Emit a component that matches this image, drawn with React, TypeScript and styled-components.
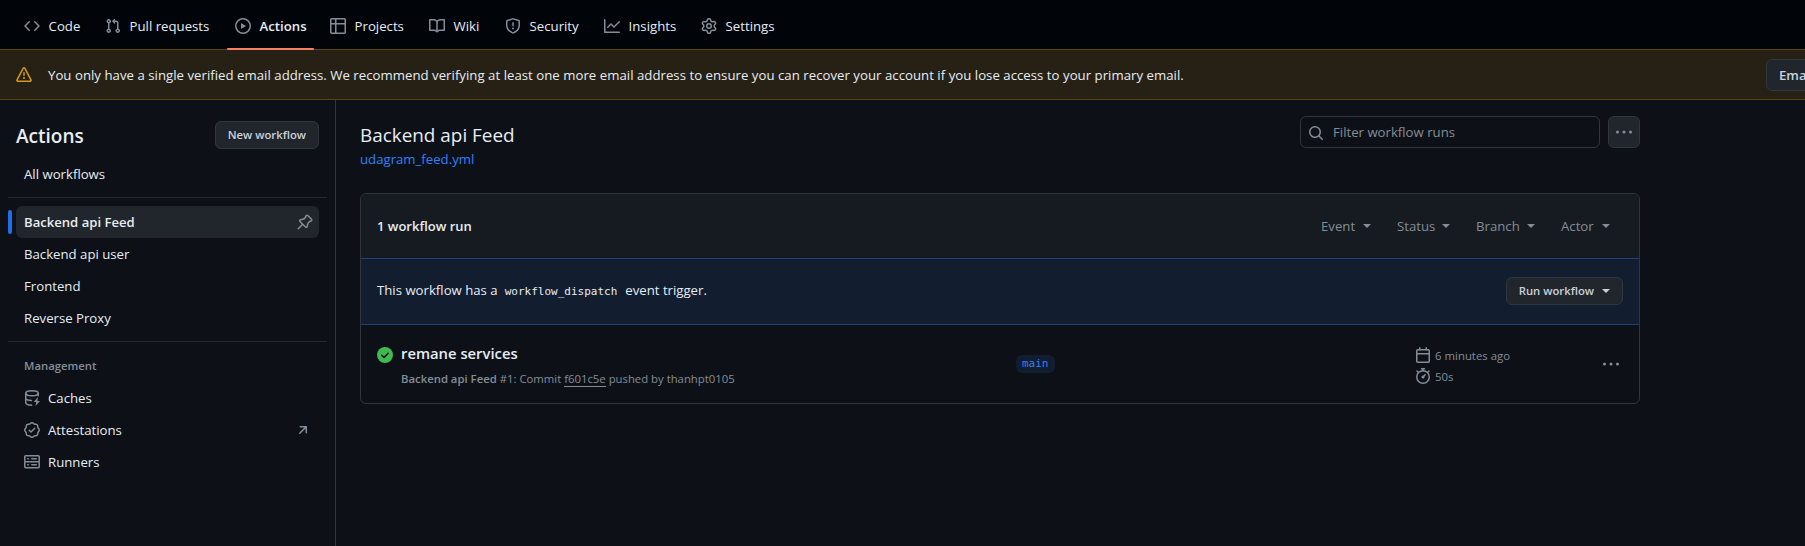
import React from 'react';
import styled, { createGlobalStyle, css } from 'styled-components';

const GlobalStyle = createGlobalStyle`
  *, *::before, *::after { box-sizing: border-box; }
  html, body { margin: 0; background: #0d1117; overflow: hidden; }
  body {
    font-family: 'Open Sans', 'Noto Sans', sans-serif;
    font-size: 13.2px;
    line-height: 21px;
    color: #e6edf3;
  }
  button, input { font-family: inherit; }
  a { color: inherit; text-decoration: none; }
  h1, h2, h3, p, ul { margin: 0; padding: 0; font-weight: inherit; }
`;

const paths = {
  code: 'm11.28 3.22 4.25 4.25a.75.75 0 0 1 0 1.06l-4.25 4.25a.749.749 0 0 1-1.275-.326.749.749 0 0 1 .215-.734L13.94 8l-3.72-3.72a.749.749 0 0 1 .326-1.275.749.749 0 0 1 .734.215Zm-6.56 0a.751.751 0 0 1 1.042.018.751.751 0 0 1 .018 1.042L2.06 8l3.72 3.72a.749.749 0 0 1-.326 1.275.749.749 0 0 1-.734-.215L.47 8.53a.75.75 0 0 1 0-1.06Z',
  pull: 'M1.5 3.25a2.25 2.25 0 1 1 3 2.122v5.256a2.251 2.251 0 1 1-1.5 0V5.372A2.25 2.25 0 0 1 1.5 3.25Zm5.677-.177L9.573.677A.25.25 0 0 1 10 .854V2.5h1A2.5 2.5 0 0 1 13.5 5v5.628a2.251 2.251 0 1 1-1.5 0V5a1 1 0 0 0-1-1h-1v1.646a.25.25 0 0 1-.427.177L7.177 3.427a.25.25 0 0 1 0-.354ZM3.75 2.5a.75.75 0 1 0 0 1.5.75.75 0 0 0 0-1.5Zm0 9.5a.75.75 0 1 0 0 1.5.75.75 0 0 0 0-1.5Zm8.25.75a.75.75 0 1 0 1.5 0 .75.75 0 0 0-1.5 0Z',
  play: 'M8 0a8 8 0 1 1 0 16A8 8 0 0 1 8 0ZM1.5 8a6.5 6.5 0 1 0 13 0 6.5 6.5 0 0 0-13 0Zm4.879-2.773 4.264 2.559a.25.25 0 0 1 0 .428l-4.264 2.559A.25.25 0 0 1 6 10.559V5.442a.25.25 0 0 1 .379-.215Z',
  table: 'M0 1.75C0 .784.784 0 1.75 0h12.5C15.216 0 16 .784 16 1.75v12.5A1.75 1.75 0 0 1 14.25 16H1.75A1.75 1.75 0 0 1 0 14.25ZM6.5 6.5v8h7.75a.25.25 0 0 0 .25-.25V6.5Zm8-1.5V1.75a.25.25 0 0 0-.25-.25H6.5V5Zm-13 1.5v7.75c0 .138.112.25.25.25H5v-8ZM5 5V1.5H1.75a.25.25 0 0 0-.25.25V5Z',
  book: 'M0 1.75A.75.75 0 0 1 .75 1h4.253c1.227 0 2.317.59 3 1.501A3.743 3.743 0 0 1 11.006 1h4.245a.75.75 0 0 1 .75.75v10.5a.75.75 0 0 1-.75.75h-4.507a2.25 2.25 0 0 0-1.591.659l-.622.621a.75.75 0 0 1-1.06 0l-.622-.621A2.25 2.25 0 0 0 5.258 13H.75a.75.75 0 0 1-.75-.75Zm7.251 10.324.004-5.073-.002-2.253A2.25 2.25 0 0 0 5.003 2.5H1.5v9h3.757a3.75 3.75 0 0 1 1.994.574ZM8.755 4.75l-.004 7.322a3.752 3.752 0 0 1 1.992-.572H14.5v-9h-3.495a2.25 2.25 0 0 0-2.25 2.25Z',
  shield: 'M7.467.133a1.748 1.748 0 0 1 1.066 0l5.25 1.68A1.75 1.75 0 0 1 15 3.48V7c0 1.566-.32 3.182-1.303 4.682-.983 1.498-2.585 2.813-5.032 3.855a1.697 1.697 0 0 1-1.33 0c-2.447-1.042-4.049-2.357-5.032-3.855C1.32 10.182 1 8.566 1 7V3.48a1.75 1.75 0 0 1 1.217-1.667Zm.61 1.429a.25.25 0 0 0-.153 0l-5.25 1.68a.25.25 0 0 0-.174.238V7c0 1.358.275 2.666 1.057 3.86.784 1.194 2.121 2.34 4.366 3.297a.196.196 0 0 0 .154 0c2.245-.956 3.582-2.104 4.366-3.298C13.225 9.666 13.5 8.36 13.5 7V3.48a.251.251 0 0 0-.174-.237l-5.25-1.68ZM8.75 4.75v3a.75.75 0 0 1-1.5 0v-3a.75.75 0 0 1 1.5 0ZM9 10.5a1 1 0 1 1-2 0 1 1 0 0 1 2 0Z',
  graph: 'M1.5 1.75V13.5h13.75a.75.75 0 0 1 0 1.5H.75a.75.75 0 0 1-.75-.75V1.75a.75.75 0 0 1 1.5 0Zm14.28 2.53-5.25 5.25a.75.75 0 0 1-1.06 0L7 7.06 4.28 9.78a.751.751 0 0 1-1.042-.018.751.751 0 0 1-.018-1.042l3.25-3.25a.75.75 0 0 1 1.06 0L10 7.94l4.72-4.72a.751.751 0 0 1 1.042.018.751.751 0 0 1 .018 1.042Z',
  gear: 'M8 0a8.2 8.2 0 0 1 .701.031C9.444.095 9.99.645 10.16 1.29l.288 1.107c.018.066.079.158.212.224.231.114.454.243.668.386.123.082.233.09.299.071l1.103-.303c.644-.176 1.392.021 1.82.63.27.385.506.792.704 1.218.315.675.111 1.422-.364 1.891l-.814.806c-.049.048-.098.147-.088.294.016.257.016.515 0 .772-.01.147.038.246.088.294l.814.806c.475.469.679 1.216.364 1.891a7.977 7.977 0 0 1-.704 1.217c-.428.61-1.176.807-1.82.63l-1.102-.302c-.067-.019-.177-.011-.3.071a5.909 5.909 0 0 1-.668.386c-.133.066-.194.158-.211.224l-.29 1.106c-.168.646-.715 1.196-1.458 1.26a8.006 8.006 0 0 1-1.402 0c-.743-.064-1.289-.614-1.458-1.26l-.289-1.106c-.018-.066-.079-.158-.212-.224a5.738 5.738 0 0 1-.668-.386c-.123-.082-.233-.09-.299-.071l-1.103.303c-.644.176-1.392-.021-1.82-.63a8.12 8.12 0 0 1-.704-1.218c-.315-.675-.111-1.422.363-1.891l.815-.806c.05-.048.098-.147.088-.294a6.214 6.214 0 0 1 0-.772c.01-.147-.038-.246-.088-.294l-.815-.806C.635 6.045.431 5.298.746 4.623a7.92 7.92 0 0 1 .704-1.217c.428-.61 1.176-.807 1.82-.63l1.102.302c.067.019.177.011.3-.071.214-.143.437-.272.668-.386.133-.066.194-.158.211-.224l.29-1.106C6.009.645 6.556.095 7.299.03 7.53.01 7.764 0 8 0Zm-.571 1.525c-.036.003-.108.036-.137.146l-.289 1.105c-.147.561-.549.967-.998 1.189-.173.086-.34.183-.5.29-.417.278-.97.423-1.529.27l-1.103-.303c-.109-.03-.175.016-.195.045-.22.312-.412.644-.573.99-.014.031-.021.11.059.19l.815.806c.411.406.562.957.53 1.456a4.709 4.709 0 0 0 0 .582c.032.499-.119 1.05-.53 1.456l-.815.806c-.081.08-.073.159-.059.19.162.346.353.677.573.989.02.03.085.076.195.046l1.102-.303c.56-.153 1.113-.008 1.53.27.161.107.328.204.501.29.447.222.85.629.997 1.189l.289 1.105c.029.109.101.143.137.146a6.6 6.6 0 0 0 1.142 0c.036-.003.108-.036.137-.146l.289-1.105c.147-.561.549-.967.998-1.189.173-.086.34-.183.5-.29.417-.278.97-.423 1.529-.27l1.103.303c.109.029.175-.016.195-.045.22-.313.411-.644.573-.99.014-.031.021-.11-.059-.19l-.815-.806c-.411-.406-.562-.957-.53-1.456a4.709 4.709 0 0 0 0-.582c-.032-.499.119-1.05.53-1.456l.815-.806c.081-.08.073-.159.059-.19a6.464 6.464 0 0 0-.573-.989c-.02-.03-.085-.076-.195-.046l-1.102.303c-.56.153-1.113.008-1.53-.27a4.44 4.44 0 0 0-.501-.29c-.447-.222-.85-.629-.997-1.189l-.289-1.105c-.029-.11-.101-.143-.137-.146a6.6 6.6 0 0 0-1.142 0ZM11 8a3 3 0 1 1-6 0 3 3 0 0 1 6 0ZM9.5 8a1.5 1.5 0 1 0-3.001.001A1.5 1.5 0 0 0 9.5 8Z',
  alert: 'M6.457 1.047c.659-1.234 2.427-1.234 3.086 0l6.082 11.378A1.75 1.75 0 0 1 14.082 15H1.918a1.75 1.75 0 0 1-1.543-2.575Zm1.763.707a.25.25 0 0 0-.44 0L1.698 13.132a.25.25 0 0 0 .22.368h12.164a.25.25 0 0 0 .22-.368Zm.53 3.996v2.5a.75.75 0 0 1-1.5 0v-2.5a.75.75 0 0 1 1.5 0ZM9 11a1 1 0 1 1-2 0 1 1 0 0 1 2 0Z',
  pin: 'm11.294.984 3.722 3.722a1.75 1.75 0 0 1-.504 2.826l-1.327.613a3.089 3.089 0 0 0-1.707 2.084l-.584 2.454c-.317 1.332-1.972 1.8-2.94.832L5.75 11.311 1.78 15.28a.749.749 0 1 1-1.06-1.06l3.969-3.97-2.204-2.204c-.968-.968-.5-2.623.832-2.94l2.454-.584a3.08 3.08 0 0 0 2.084-1.707l.613-1.327a1.75 1.75 0 0 1 2.826-.504ZM6.283 9.723l2.732 2.731a.25.25 0 0 0 .42-.119l.584-2.454a4.586 4.586 0 0 1 2.537-3.098l1.328-.613a.25.25 0 0 0 .072-.404l-3.722-3.722a.25.25 0 0 0-.404.072l-.613 1.328a4.584 4.584 0 0 1-3.098 2.537l-2.454.584a.25.25 0 0 0-.119.42l2.731 2.732Z',
  verified: 'm9.585.52.929.68c.153.112.331.186.518.215l1.138.175a2.678 2.678 0 0 1 2.24 2.24l.174 1.139c.029.187.103.365.215.518l.68.928a2.677 2.677 0 0 1 0 3.17l-.68.928a1.174 1.174 0 0 0-.215.518l-.175 1.138a2.678 2.678 0 0 1-2.241 2.241l-1.138.175a1.17 1.17 0 0 0-.518.215l-.928.68a2.677 2.677 0 0 1-3.17 0l-.928-.68a1.174 1.174 0 0 0-.518-.215L3.83 14.41a2.678 2.678 0 0 1-2.24-2.24l-.175-1.138a1.17 1.17 0 0 0-.215-.518l-.68-.928a2.677 2.677 0 0 1 0-3.17l.68-.928c.112-.153.186-.331.215-.518l.175-1.14a2.678 2.678 0 0 1 2.24-2.24l1.139-.175c.187-.029.365-.103.518-.215l.928-.68a2.677 2.677 0 0 1 3.17 0ZM7.303 1.728l-.927.68a2.67 2.67 0 0 1-1.18.489l-1.137.174a1.179 1.179 0 0 0-.987.987l-.174 1.136a2.677 2.677 0 0 1-.489 1.18l-.68.928a1.18 1.18 0 0 0 0 1.394l.68.927c.256.348.424.753.489 1.18l.174 1.137c.078.509.478.909.987.987l1.136.174a2.67 2.67 0 0 1 1.18.489l.928.68c.414.305.979.305 1.394 0l.927-.68a2.67 2.67 0 0 1 1.18-.489l1.137-.174a1.18 1.18 0 0 0 .987-.987l.174-1.136a2.67 2.67 0 0 1 .489-1.18l.68-.928a1.176 1.176 0 0 0 0-1.394l-.68-.927a2.686 2.686 0 0 1-.489-1.18l-.174-1.137a1.179 1.179 0 0 0-.987-.987l-1.136-.174a2.677 2.677 0 0 1-1.18-.489l-.928-.68a1.176 1.176 0 0 0-1.394 0ZM11.28 6.78l-3.75 3.75a.75.75 0 0 1-1.06 0L4.72 8.78a.751.751 0 0 1 .018-1.042.751.751 0 0 1 1.042-.018L7 8.94l3.22-3.22a.751.751 0 0 1 1.042.018.751.751 0 0 1 .018 1.042Z',
  server: 'M1.75 1h12.5c.966 0 1.75.784 1.75 1.75v4c0 .372-.116.717-.314 1 .198.283.314.628.314 1v4a1.75 1.75 0 0 1-1.75 1.75H1.75A1.75 1.75 0 0 1 0 12.75v-4c0-.358.109-.707.314-1a1.739 1.739 0 0 1-.314-1v-4C0 1.784.784 1 1.75 1ZM1.5 2.75v4c0 .138.112.25.25.25h12.5a.25.25 0 0 0 .25-.25v-4a.25.25 0 0 0-.25-.25H1.75a.25.25 0 0 0-.25.25Zm.25 5.75a.25.25 0 0 0-.25.25v4c0 .138.112.25.25.25h12.5a.25.25 0 0 0 .25-.25v-4a.25.25 0 0 0-.25-.25ZM7 4.75A.75.75 0 0 1 7.75 4h4.5a.75.75 0 0 1 0 1.5h-4.5A.75.75 0 0 1 7 4.75ZM7.75 10h4.5a.75.75 0 0 1 0 1.5h-4.5a.75.75 0 0 1 0-1.5ZM3 4.75A.75.75 0 0 1 3.75 4h.5a.75.75 0 0 1 0 1.5h-.5A.75.75 0 0 1 3 4.75ZM3.75 10h.5a.75.75 0 0 1 0 1.5h-.5a.75.75 0 0 1 0-1.5Z',
  search: 'M10.68 11.74a6 6 0 0 1-7.922-8.982 6 6 0 0 1 8.982 7.922l3.04 3.04a.749.749 0 0 1-.326 1.275.749.749 0 0 1-.734-.215ZM11.5 7a4.499 4.499 0 1 0-8.997 0A4.499 4.499 0 0 0 11.5 7Z',
  kebab: 'M8 9.5a1.5 1.5 0 1 0 0-3 1.5 1.5 0 0 0 0 3ZM1.5 9.5a1.5 1.5 0 1 0 0-3 1.5 1.5 0 0 0 0 3Zm13 0a1.5 1.5 0 1 0 0-3 1.5 1.5 0 0 0 0 3Z',
  arrow: 'M4.53 4.75A.75.75 0 0 1 5.28 4h6.01a.75.75 0 0 1 .75.75v6.01a.75.75 0 0 1-1.5 0v-4.2l-5.26 5.261a.749.749 0 0 1-1.275-.326.749.749 0 0 1 .215-.734L9.48 5.5h-4.2a.75.75 0 0 1-.75-.75Z',
};

type IconName = keyof typeof paths;

const IconSvg = styled.svg<{ $color: string }>`
  flex: none;
  display: block;
  color: ${(p) => p.$color};
`;

const Icon = ({ name, color = '#848d97' }: { name: IconName; color?: string }) => (
  <IconSvg $color={color} width="16" height="16" viewBox="0 0 16 16" fill="currentColor">
    <path d={paths[name]} />
  </IconSvg>
);

const CacheIcon = () => (
  <IconSvg $color="#848d97" width="16" height="16" viewBox="0 0 16 16" fill="none" stroke="currentColor" strokeWidth="1.5" strokeLinecap="round">
    <ellipse cx="8" cy="3.25" rx="6.25" ry="2.5" />
    <path d="M1.75 3.25v9.250c0 1.400 2.400 2.600 6 2.750M14.250 3.250v2.500M1.750 7.900c0 1.300 2 2.300 5.700 2.500" />
    <path d="M13.900 7.100 9.700 12.100h2.500l-.700 3.900L16 10.900h-2.600Z" fill="currentColor" stroke="none" />
  </IconSvg>
);

const CalendarIcon = () => (
  <IconSvg $color="#848d97" width="16" height="16" viewBox="0 0 16 16" fill="none" stroke="currentColor" strokeWidth="1.5">
    <rect x="1.75" y="2.75" width="12.5" height="12.5" rx="1" />
    <path d="M1.75 6.75h12.5" />
    <path d="M4.75.75v2M11.25.75v2" strokeLinecap="round" />
  </IconSvg>
);

const StopwatchIcon = () => (
  <IconSvg $color="#848d97" width="16" height="16" viewBox="0 0 16 16" fill="none" stroke="currentColor" strokeWidth="1.5" strokeLinecap="round">
    <circle cx="8" cy="9" r="6.25" />
    <path d="M6.5.75h3M8 1v1.700M13 4l1-1M3 4 2 3M8.200 8.800l2-2.100" />
    <circle cx="8" cy="9" r=".8" fill="currentColor" />
  </IconSvg>
);

const SuccessIcon = () => (
  <IconSvg $color="#3fb950" width="16" height="16" viewBox="0 0 16 16" fill="none">
    <circle cx="8" cy="8" r="8" fill="currentColor" />
    <path d="m4.800 8.300 2.200 2.200 4.200-4.300" stroke="#0d1117" strokeWidth="1.5" strokeLinecap="round" strokeLinejoin="round" />
  </IconSvg>
);

const Caret = styled.span`
  flex: none;
  border: 4px solid transparent;
  border-top-color: currentColor;
  border-bottom: 0;
`;

const Page = styled.div`
  display: flex;
  flex-direction: column;
  height: 546px;
  overflow: hidden;
`;

const RepoNav = styled.nav`
  display: flex;
  flex: none;
  gap: 8px;
  height: 49px;
  padding: 0 16px;
  background: #010409;
`;

const NavTab = styled.a<{ $w: number; $active?: boolean }>`
  position: relative;
  display: flex;
  align-items: center;
  gap: 8.6px;
  width: ${(p) => p.$w}px;
  height: 52px;
  padding: 0 8px;
  white-space: nowrap;
  ${(p) =>
    p.$active &&
    css`
      font-weight: 600;
      &::after {
        content: '';
        position: absolute;
        left: 0;
        right: 0;
        top: 48px;
        height: 2px;
        border-radius: 6px;
        background: #f78166;
      }
    `}
`;

const Flash = styled.div`
  display: flex;
  flex: none;
  align-items: center;
  height: 51px;
  padding-left: 16px;
  gap: 16px;
  border: solid #5e4510;
  border-width: 1px 0;
  background: #272115;
  white-space: nowrap;
`;

const FlashText = styled.p`
  width: 1702px;
  flex: none;
  padding-top: 2px;
  letter-spacing: 0.028px;
`;

const Button = styled.button<{ $size?: 'small' | 'medium' }>`
  display: inline-flex;
  flex: none;
  align-items: center;
  justify-content: center;
  gap: 8px;
  height: ${(p) => (p.$size === 'medium' ? 32 : 28)}px;
  padding: 0 12px;
  border: 1px solid #30363d;
  border-radius: 6px;
  background: #21262d;
  color: #c9d1d9;
  font-size: ${(p) => (p.$size === 'medium' ? 13.2 : 11.3)}px;
  font-weight: 600;
  line-height: 20px;
  white-space: nowrap;
`;

const IconButton = styled(Button)`
  width: 32px;
  padding: 0;
  color: #848d97;
`;

const Body = styled.div`
  display: flex;
  flex: 1;
  min-height: 0;
`;

const Sidebar = styled.aside`
  flex: none;
  width: 336px;
  padding: 21px 8px 0;
  border-right: 1px solid #30363d;
`;

const SidebarHeader = styled.div`
  display: flex;
  align-items: center;
  justify-content: space-between;
  height: 28px;
  margin-bottom: 9px;
  padding: 0 8px;
`;

const SidebarTitle = styled.h2`
  padding-top: 2px;
  font-size: 19px;
  font-weight: 600;
`;

const Divider = styled.hr`
  height: 1px;
  margin: 7px 0 8px;
  border: 0;
  background: #24292f;
`;

const NavItem = styled.a<{ $active?: boolean }>`
  position: relative;
  display: flex;
  align-items: center;
  gap: 8px;
  height: 32px;
  margin: 0 8px;
  padding: 0 6px 0 8px;
  border-radius: 6px;
  ${(p) =>
    p.$active &&
    css`
      background: #21252c;
      font-weight: 600;
      font-size: 13.1px;
      &::before {
        content: '';
        position: absolute;
        left: -8px;
        top: 4px;
        width: 4px;
        height: 24px;
        border-radius: 6px;
        background: #1f6feb;
      }
    `}
`;

const NavLabel = styled.span`
  flex: 1;
`;

const Trailing = styled.span`
  margin-right: 2px;
`;

const GroupTitle = styled.h3`
  margin: 15px 16px 7px;
  color: #848d97;
  font-size: 11.3px;
  font-weight: 600;
  line-height: 18px;
`;

const Main = styled.main`
  flex: none;
  width: 1280px;
  margin-left: 24px;
  padding-top: 16px;
`;

const MainHeader = styled.div`
  display: flex;
  align-items: flex-start;
  justify-content: space-between;
  height: 77px;
`;

const PageTitle = styled.h1`
  padding-top: 4px;
  font-size: 18.9px;
  line-height: 30px;
`;

const FileLink = styled.a`
  display: block;
  margin-top: -1px;
  color: #2f81f7;
`;

const Tools = styled.div`
  display: flex;
  gap: 8px;
`;

const SearchBox = styled.label`
  display: flex;
  align-items: center;
  gap: 9px;
  width: 300px;
  height: 32px;
  padding: 0 7px;
  border: 1px solid #30363d;
  border-radius: 6px;
  svg { margin-top: 2px; }
`;

const SearchInput = styled.input`
  flex: 1;
  min-width: 0;
  padding: 0;
  border: 0;
  outline: 0;
  background: transparent;
  font-size: 13.2px;
  &::placeholder { color: #848d97; }
`;

const RunsBox = styled.section`
  height: 211px;
  border: 1px solid #30363d;
  border-radius: 6px;
  overflow: hidden;
`;

const RunsHeader = styled.header`
  display: flex;
  align-items: center;
  justify-content: space-between;
  height: 64px;
  padding: 0 29px 0 16px;
  background: #161b22;
`;

const RunsCount = styled.strong`
  padding-top: 1px;
  font-size: 13px;
  font-weight: 600;
`;

const Filters = styled.div`
  display: flex;
  gap: 26px;
  color: #848d97;
`;

const Filter = styled.span<{ $w: number }>`
  display: flex;
  align-items: center;
  justify-content: space-between;
  width: ${(p) => p.$w}px;
`;

const Dispatch = styled.div`
  display: flex;
  align-items: center;
  justify-content: space-between;
  height: 67px;
  padding: 0 16px 2px;
  border: solid #1d4379;
  border-width: 1px 0;
  background: #121d2f;
`;

const Code = styled.code`
  margin: 0 8px 0 7px;
  font-family: 'DejaVu Sans Mono', monospace;
  font-size: 11px;
`;

const RunRow = styled.div`
  display: grid;
  grid-template-columns: 24px 615px 399px 188px 16px;
  height: 78px;
  padding: 0 16px;
`;

const RunIcon = styled.div`
  padding-top: 22px;
`;

const RunTitle = styled.h3`
  padding-top: 16px;
  font-size: 14.8px;
  font-weight: 600;
  line-height: 24px;
`;

const RunMeta = styled.p`
  margin-top: 5px;
  color: #848d97;
  font-size: 11.34px;
  line-height: 18px;
  b { font-weight: 600; }
`;

const Commit = styled.a`
  border-bottom: 1px solid #848d97;
`;

const BranchCell = styled.div`
  display: flex;
  align-items: flex-start;
  padding-top: 30px;
`;

const Branch = styled.span`
  height: 18px;
  padding: 0 6px;
  border-radius: 6px;
  background: #121d2f;
  color: #2f81f7;
  font: 11px/18px 'DejaVu Sans Mono', monospace;
`;

const Times = styled.div`
  display: flex;
  flex-direction: column;
  gap: 5px;
  padding-top: 22px;
  color: #848d97;
  font-size: 11.4px;
`;

const TimeLine = styled.span`
  display: flex;
  align-items: center;
  gap: 4px;
  height: 16px;
`;

const RowMenu = styled.div`
  padding-top: 31px;
`;

const tabs: { icon: IconName; label: string; width: number; active?: boolean }[] = [
  { icon: 'code', label: 'Code', width: 73 },
  { icon: 'pull', label: 'Pull requests', width: 122 },
  { icon: 'play', label: 'Actions', width: 87, active: true },
  { icon: 'table', label: 'Projects', width: 91 },
  { icon: 'book', label: 'Wiki', width: 68 },
  { icon: 'shield', label: 'Security', width: 91 },
  { icon: 'graph', label: 'Insights', width: 89 },
  { icon: 'gear', label: 'Settings', width: 92 },
];

const filters = [
  { label: 'Event', width: 50 },
  { label: 'Status', width: 53 },
  { label: 'Branch', width: 59 },
  { label: 'Actor', width: 49 },
];

export default function App() {
  return (
    <Page>
      <GlobalStyle />
      <RepoNav>
        {tabs.map((t) => (
          <NavTab key={t.label} $w={t.width} $active={t.active}>
            <Icon name={t.icon} />
            {t.label}
          </NavTab>
        ))}
      </RepoNav>
      <Flash>
        <Icon name="alert" color="#d29922" />
        <FlashText>
          You only have a single verified email address. We recommend verifying at least one more email address to
          ensure you can recover your account if you lose access to your primary email.
        </FlashText>
        <Button $size="medium">Email settings</Button>
      </Flash>
      <Body>
        <Sidebar>
          <SidebarHeader>
            <SidebarTitle>Actions</SidebarTitle>
            <Button>New workflow</Button>
          </SidebarHeader>
          <NavItem>All workflows</NavItem>
          <Divider />
          <NavItem $active>
            <NavLabel>Backend api Feed</NavLabel>
            <Icon name="pin" />
          </NavItem>
          <NavItem>Backend api user</NavItem>
          <NavItem>Frontend</NavItem>
          <NavItem>Reverse Proxy</NavItem>
          <Divider />
          <GroupTitle>Management</GroupTitle>
          <NavItem>
            <CacheIcon />
            Caches
          </NavItem>
          <NavItem>
            <Icon name="verified" />
            <NavLabel>Attestations</NavLabel>
            <Trailing>
              <Icon name="arrow" />
            </Trailing>
          </NavItem>
          <NavItem>
            <Icon name="server" />
            Runners
          </NavItem>
        </Sidebar>
        <Main>
          <MainHeader>
            <div>
              <PageTitle>Backend api Feed</PageTitle>
              <FileLink>udagram_feed.yml</FileLink>
            </div>
            <Tools>
              <SearchBox>
                <Icon name="search" />
                <SearchInput placeholder="Filter workflow runs" />
              </SearchBox>
              <IconButton $size="medium" aria-label="More options">
                <Icon name="kebab" />
              </IconButton>
            </Tools>
          </MainHeader>
          <RunsBox>
            <RunsHeader>
              <RunsCount>1 workflow run</RunsCount>
              <Filters>
                {filters.map((f) => (
                  <Filter key={f.label} $w={f.width}>
                    {f.label}
                    <Caret />
                  </Filter>
                ))}
              </Filters>
            </RunsHeader>
            <Dispatch>
              <p>
                This workflow has a<Code>workflow_dispatch</Code>event trigger.
              </p>
              <Button>
                Run workflow
                <Caret />
              </Button>
            </Dispatch>
            <RunRow>
              <RunIcon>
                <SuccessIcon />
              </RunIcon>
              <div>
                <RunTitle>remane services</RunTitle>
                <RunMeta>
                  <b>Backend api Feed</b> #1: Commit <Commit>f601c5e</Commit> pushed by thanhpt0105
                </RunMeta>
              </div>
              <BranchCell>
                <Branch>main</Branch>
              </BranchCell>
              <Times>
                <TimeLine>
                  <CalendarIcon />6 minutes ago
                </TimeLine>
                <TimeLine>
                  <StopwatchIcon />
                  50s
                </TimeLine>
              </Times>
              <RowMenu>
                <Icon name="kebab" />
              </RowMenu>
            </RunRow>
          </RunsBox>
        </Main>
      </Body>
    </Page>
  );
}
